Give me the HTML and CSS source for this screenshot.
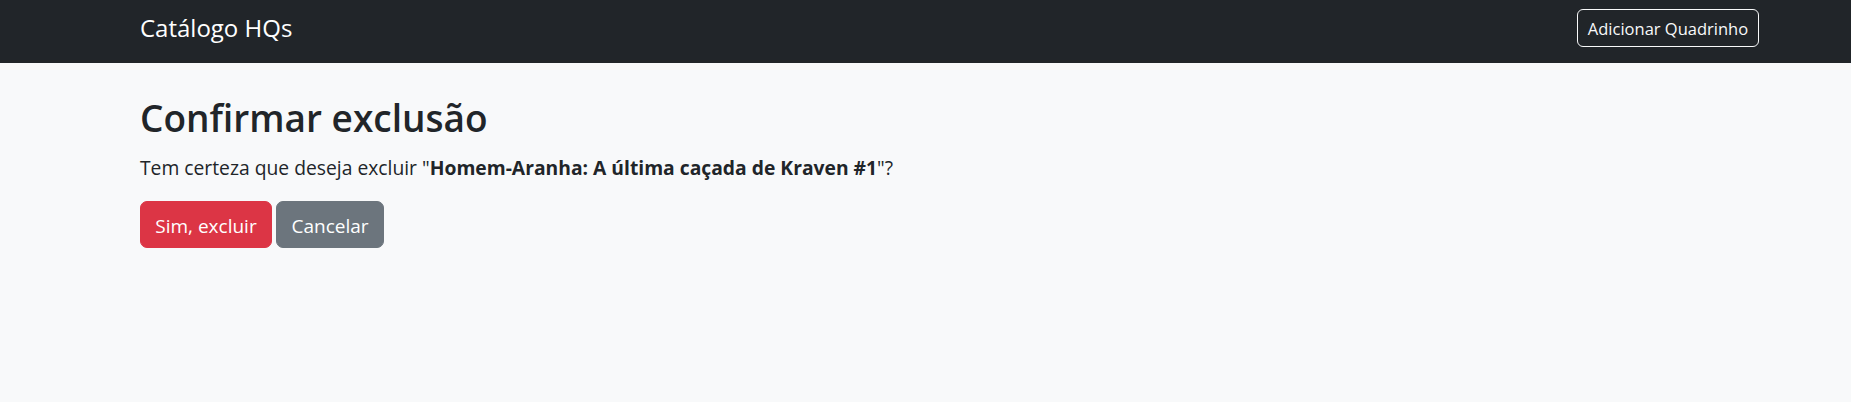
FILE: index.html
```html
<!DOCTYPE html>
<html lang="pt-BR">
<head>
<meta charset="utf-8">
<title>Catálogo HQs</title>
<link rel="stylesheet" href="styles.css">
</head>
<body>
<nav class="navbar">
  <div class="nav-inner">
    <a class="brand" href="#">Catálogo HQs</a>
    <a class="btn btn-outline-light" href="#">Adicionar Quadrinho</a>
  </div>
</nav>
<main class="content">
  <h1 class="title">Confirmar exclusão</h1>
  <p class="question">Tem certeza que deseja excluir "<strong>Homem-Aranha: A última caçada de Kraven #1</strong>"?</p>
  <form class="actions">
    <button class="btn btn-lg btn-danger" type="button">Sim, excluir</button>
    <a class="btn btn-lg btn-secondary" href="#">Cancelar</a>
  </form>
</main>
</body>
</html>
```

FILE: styles.css
```css
* { box-sizing: border-box; }
body {
  margin: 0;
  background: #f8f9fa;
  color: #212529;
  font-family: "Open Sans", "Noto Sans", sans-serif;
  font-size: 16px;
  line-height: 1.5;
}
.navbar {
  background: #212529;
  height: 63px;
  padding-top: 8px;
}
.nav-inner {
  display: flex;
  justify-content: space-between;
  align-items: center;
  height: 40px;
  padding: 0 92px 0 140px;
}
.brand {
  color: #fff;
  text-decoration: none;
  font-size: 24px;
  line-height: 30px;
}
.btn {
  display: inline-flex;
  align-items: center;
  justify-content: center;
  border: 1px solid transparent;
  border-radius: 6px;
  text-decoration: none;
  font-family: inherit;
  font-size: 16px;
  line-height: 24px;
  padding: 6px 12px;
  cursor: pointer;
}
.btn-outline-light {
  color: #f8f9fa;
  border-color: #f8f9fa;
  height: 38px;
  width: 182px;
  padding: 7px 0 5px;
  font-size: 16.5px;
}
.content {
  padding: 0 140px;
}
.title {
  margin: 0;
  padding-top: 32px;
  font-size: 37px;
  font-weight: 600;
  line-height: 46px;
}
.question {
  margin: 12px 0 19px;
  font-size: 19.3px;
  line-height: 29px;
}
.question strong { font-weight: 700; }
.actions {
  display: flex;
  gap: 4px;
}
.btn-lg {
  font-size: 19px;
  line-height: 28px;
  height: 47px;
  padding: 2px 0 0;
  border-radius: 7px;
}
.btn-danger { background: #dc3545; border-color: #dc3545; color: #fff; width: 132px; }
.btn-secondary { background: #6c757d; border-color: #6c757d; color: #fff; width: 108px; }
```
